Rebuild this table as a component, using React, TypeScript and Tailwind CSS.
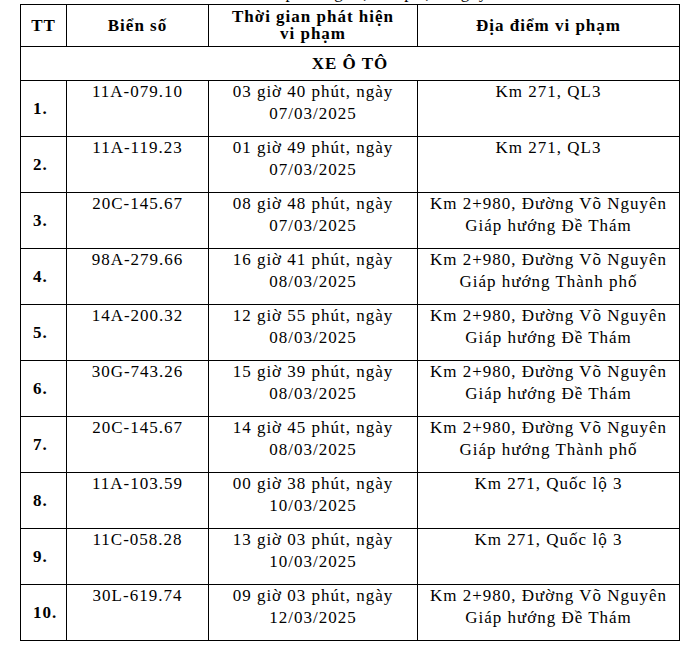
import React from 'react';

interface Row {
    plate: string;
    time: string;
    date: string;
    place: string[];
}

const VNG = 'Km 2+980, Đường Võ Nguyên';

const rows: Row[] = [
    { plate: '11A-079.10', time: '03 giờ 40 phút, ngày', date: '07/03/2025', place: ['Km 271, QL3'] },
    { plate: '11A-119.23', time: '01 giờ 49 phút, ngày', date: '07/03/2025', place: ['Km 271, QL3'] },
    { plate: '20C-145.67', time: '08 giờ 48 phút, ngày', date: '07/03/2025', place: [VNG, 'Giáp hướng Đề Thám'] },
    { plate: '98A-279.66', time: '16 giờ 41 phút, ngày', date: '08/03/2025', place: [VNG, 'Giáp hướng Thành phố'] },
    { plate: '14A-200.32', time: '12 giờ 55 phút, ngày', date: '08/03/2025', place: [VNG, 'Giáp hướng Đề Thám'] },
    { plate: '30G-743.26', time: '15 giờ 39 phút, ngày', date: '08/03/2025', place: [VNG, 'Giáp hướng Đề Thám'] },
    { plate: '20C-145.67', time: '14 giờ 45 phút, ngày', date: '08/03/2025', place: [VNG, 'Giáp hướng Thành phố'] },
    { plate: '11A-103.59', time: '00 giờ 38 phút, ngày', date: '10/03/2025', place: ['Km 271, Quốc lộ 3'] },
    { plate: '11C-058.28', time: '13 giờ 03 phút, ngày', date: '10/03/2025', place: ['Km 271, Quốc lộ 3'] },
    { plate: '30L-619.74', time: '09 giờ 03 phút, ngày', date: '12/03/2025', place: [VNG, 'Giáp hướng Đề Thám'] },
];

const cell = 'border border-black p-0';

export default function App() {
    return (
        <div className="min-h-[651px] w-[695px] bg-white text-black font-['Liberation_Serif',serif] text-[17px] tracking-[1px]">
            {/* line of the page above, cut off by the screenshot */}
            <div className="flex h-[4px] flex-col justify-end overflow-hidden pl-[200px] leading-[22px]">
                <span>Danh sách phương tiện vi phạm ngày</span>
            </div>
            <table className="ml-[20px] w-[659px] table-fixed border-collapse">
                <colgroup>
                    <col className="w-[46px]" />
                    <col className="w-[142px]" />
                    <col className="w-[209px]" />
                    <col className="w-[262px]" />
                </colgroup>
                <thead>
                    <tr className="h-[42px] font-bold leading-[17px]">
                        <th className={`${cell} text-center align-middle`}>TT</th>
                        <th className={`${cell} text-center align-middle`}>Biển số</th>
                        <th className={`${cell} pb-[1px] text-center align-middle`}>
                            Thời gian phát hiện
                            <br />
                            vi phạm
                        </th>
                        <th className={`${cell} text-center align-middle`}>Địa điểm vi phạm</th>
                    </tr>
                </thead>
                <tbody className="leading-[22px]">
                    <tr className="h-[34px]">
                        <td colSpan={4} className={`${cell} text-center align-middle font-bold`}>
                            XE Ô TÔ
                        </td>
                    </tr>
                    {rows.map((r, i) => (
                        <tr key={i} className="h-[56px]">
                            <td className={`${cell} pl-[12px] align-middle font-bold`}>{i + 1}.</td>
                            <td className={`${cell} text-center align-top`}>{r.plate}</td>
                            <td className={`${cell} text-center align-top`}>
                                {r.time}
                                <br />
                                {r.date}
                            </td>
                            <td className={`${cell} text-center align-top`}>
                                {r.place.map((p, j) => (
                                    <div key={j}>{p}</div>
                                ))}
                            </td>
                        </tr>
                    ))}
                </tbody>
            </table>
        </div>
    );
}
